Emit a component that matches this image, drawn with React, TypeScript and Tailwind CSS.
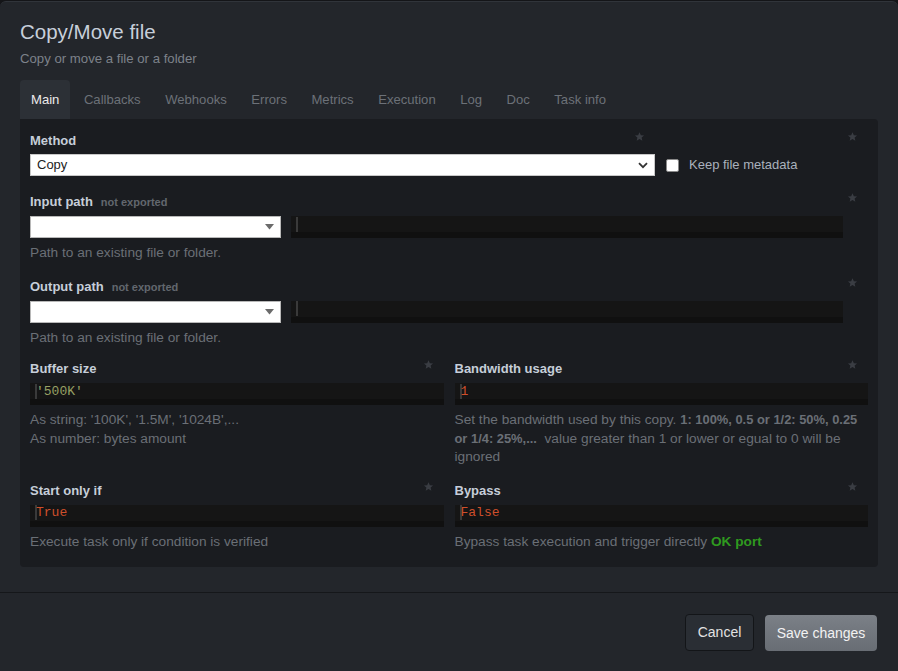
import React from "react";

const Star = () => (
  <svg width="11" height="11" viewBox="0 0 24 24" className="shrink-0">
    <path d="M12 2.5l2.9 6.6 7.1.6-5.4 4.7 1.6 7-6.2-3.8-6.2 3.8 1.6-7L2 9.7l7.1-.6z" fill="#3a3d43" />
  </svg>
);

const Code = ({ value, color, className = "" }: { value: string; color: string; className?: string }) => (
  <div className={"h-[22px] flex flex-col " + className}>
    <div className="h-[16px] bg-[#151515] flex items-center pl-[5px]">
      <div className="w-[2px] h-[15px] bg-[#3a3a3a]" />
      <span className="font-['Liberation_Mono'] text-[13px] leading-[15px] ml-[-1px]" style={{ color }}>
        {value}
      </span>
    </div>
    <div className="h-[6px] bg-[#101010]" />
  </div>
);

const Label = ({ text, sub }: { text: string; sub?: string }) => (
  <div className="flex items-start justify-between pr-[10px] h-[18px]">
    <div className="flex items-baseline gap-[8px]">
      <span className="text-[13px] leading-[18px] font-bold text-[#c6ced9]">{text}</span>
      {sub && <span className="text-[11px] font-bold text-[#62676e]">{sub}</span>}
    </div>
    <div className="mt-[-1px]">
      <Star />
    </div>
  </div>
);

const Help = ({ children }: { children: React.ReactNode }) => (
  <div className="mt-[6px] text-[13.7px] leading-[18.5px] text-[#6a6f76]">{children}</div>
);

const PathSelect = () => (
  <div className="w-[251px] h-[22px] bg-white border border-[#b8b8b8] flex items-center justify-end pr-[6px]">
    <svg width="9" height="6" viewBox="0 0 9 6">
      <path d="M0 0h9L4.5 5.5z" fill="#6b6b6b" />
    </svg>
  </div>
);

const tabs = ["Main", "Callbacks", "Webhooks", "Errors", "Metrics", "Execution", "Log", "Doc", "Task info"];

export default function App() {
  return (
    <div className="w-[898px] h-[671px] bg-[#141518] pt-[1px] font-['Liberation_Sans',Arial,sans-serif] overflow-hidden">
      <div className="h-[670px] bg-[#23262b] rounded-t-[6px] border-t border-[#30343a] flex flex-col">
        <div className="px-[20px] pb-[25px]">
          <h1 className="text-[20.5px] leading-[28px] mt-[16px] text-[#c7cfda]">Copy/Move file</h1>
          <p className="text-[13.2px] leading-[18px] mt-[4px] text-[#7d828a]">Copy or move a file or a folder</p>

          <div className="flex gap-[2.5px] mt-[12px] h-[39px]">
            {tabs.map((t, i) => (
              <div
                key={t}
                className={
                  "px-[11px] flex items-center text-[13.1px] rounded-t-[4px] " +
                  (i === 0 ? "bg-[#2c3036] text-[#ececec]" : "text-[#6c7178]")
                }
              >
                {t}
              </div>
            ))}
          </div>

          <div className="bg-[#1a1c20] rounded-b-[4px] rounded-tr-[4px] pl-[10px] pr-[10px] pt-[13px] pb-[2px] h-[448px]">
            {/* Method */}
            <div className="flex gap-[11px] mb-[17px]">
              <div className="w-[625px]">
                <Label text="Method" />
                <div className="mt-[4px] h-[22px] bg-white border border-[#c8c8c8] flex items-center justify-between px-[6px]">
                  <span className="text-[13px] text-[#222]">Copy</span>
                  <svg width="10" height="7" viewBox="0 0 10 7">
                    <path d="M1 1.2l4 4 4-4" stroke="#333" strokeWidth="1.8" fill="none" />
                  </svg>
                </div>
              </div>
              <div className="flex-1">
                <div className="flex justify-end pr-[10px] h-[18px]">
                  <div className="mt-[-1px]">
                    <Star />
                  </div>
                </div>
                <div className="mt-[4px] h-[22px] flex items-center">
                  <div className="w-[13px] h-[13px] bg-white rounded-[2px] border border-[#8a8a8a]" />
                  <span className="ml-[10px] text-[13px] text-[#a9b1bc]">Keep file metadata</span>
                </div>
              </div>
            </div>

            {/* Input path */}
            <div className="mb-[15px]">
              <Label text="Input path" sub="not exported" />
              <div className="mt-[5px] flex gap-[10px]">
                <PathSelect />
                <Code value="" color="#fff" className="w-[552px]" />
              </div>
              <Help>Path to an existing file or folder.</Help>
            </div>

            {/* Output path */}
            <div className="mb-[13px]">
              <Label text="Output path" sub="not exported" />
              <div className="mt-[5px] flex gap-[10px]">
                <PathSelect />
                <Code value="" color="#fff" className="w-[552px]" />
              </div>
              <Help>Path to an existing file or folder.</Help>
            </div>

            <div className="grid grid-cols-2 gap-x-[11px]">
              <div className="mb-[15px]">
                <Label text="Buffer size" />
                <Code value="'500K'" color="#97a064" className="mt-[5px]" />
                <Help>
                  As string: '100K', '1.5M', '1024B',...
                  <br />
                  As number: bytes amount
                </Help>
              </div>
              <div className="mb-[15px]">
                <Label text="Bandwidth usage" />
                <Code value="1" color="#cf4f2b" className="mt-[5px]" />
                <Help>
                  Set the bandwidth used by this copy.{" "}
                  <b className="text-[12.9px]">1: 100%, 0.5 or 1/2: 50%, 0.25 or 1/4: 25%,...</b>
                  {"\u00a0 "}value greater than 1 or lower or egual to 0 will be ignored
                </Help>
              </div>
              <div>
                <Label text="Start only if" />
                <Code value="True" color="#cf4f2b" className="mt-[5px]" />
                <Help>Execute task only if condition is verified</Help>
              </div>
              <div>
                <Label text="Bypass" />
                <Code value="False" color="#cf4f2b" className="mt-[5px]" />
                <Help>
                  Bypass task execution and trigger directly <b className="text-[#2f9a1f]">OK port</b>
                </Help>
              </div>
            </div>
          </div>
        </div>

        <div className="border-t border-[#15171a] flex justify-end gap-[11px] pt-[21px] pr-[21px]">
          <button className="w-[69px] h-[37px] rounded-[4px] bg-[#2a2e34] border border-[#131518] text-[14px] text-[#e2e2e2]">
            Cancel
          </button>
          <button className="w-[112px] h-[36px] mt-[1px] rounded-[4px] bg-gradient-to-b from-[#7b8087] to-[#686d74] text-[14px] text-[#f2f2f2]">
            Save changes
          </button>
        </div>
      </div>
    </div>
  );
}
